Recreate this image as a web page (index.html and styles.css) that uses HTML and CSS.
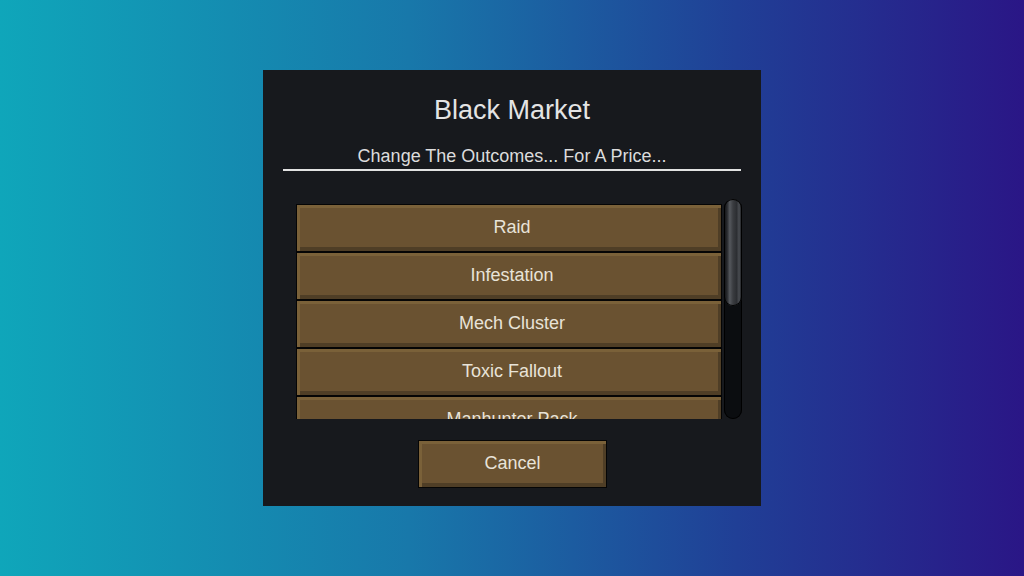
FILE: index.html
```html
<!DOCTYPE html>
<html lang="en">
<head>
    <meta charset="UTF-8">
    <meta name="viewport" content="width=device-width, initial-scale=1.0">
    <title>Black Market</title>
    <link rel="stylesheet" href="styles.css">
</head>
<body>
    <div class="market-dialog">
        <div class="dialog-title">Black Market</div>
        <div class="dialog-subtitle">Change The Outcomes... For A Price...</div>

        <!-- Scrollable list of events -->
        <div class="event-scroll">
            <div class="event-list">
                <div class="event-row">Raid</div>
                <div class="event-row">Infestation</div>
                <div class="event-row">Mech Cluster</div>
                <div class="event-row">Toxic Fallout</div>
                <div class="event-row">Manhunter Pack</div>
            </div>
            <div class="scroll-track">
                <div class="scroll-thumb"></div>
            </div>
        </div>

        <div class="dialog-footer">
            <div class="wood-button">Cancel</div>
        </div>
    </div>
</body>
</html>
```

FILE: styles.css
```css
/* Basic styling */
body {
    font-family: "Liberation Sans", Arial, sans-serif;
    margin: 0;
    padding: 0;
    width: 1024px;
    height: 576px;
    display: flex;
    align-items: center;
    justify-content: center;
    background: linear-gradient(90deg, #0fa6ba 0%, #1878aa 40%, #203f96 72%, #2a1686 100%);
}

.market-dialog {
    box-sizing: border-box;
    width: 498px;
    height: 436px;
    background-color: #17191d;
    padding: 25px 20px 19px 20px;
    display: flex;
    flex-direction: column;
}

.dialog-title {
    text-align: center;
    color: #e4e4e4;
    font-size: 27px;
    line-height: 30px;
}

.dialog-subtitle {
    text-align: center;
    color: #dcdcdc;
    font-size: 18px;
    line-height: 20px;
    margin-top: 21px;
    padding-bottom: 3px;
    border-bottom: 2px solid #e2e2e2;
}

.event-scroll {
    display: flex;
    gap: 2px;
    height: 220px;
    margin: 28px -1px 0 13px;
}

.event-list {
    width: 426px;
    padding-top: 5px;
    overflow: hidden;
}

/* Wooden plank rows */
.event-row,
.wood-button {
    box-sizing: border-box;
    height: 48px;
    display: flex;
    align-items: center;
    justify-content: center;
    color: #e8e3d8;
    font-size: 18px;
    padding-bottom: 2px;
    background-color: #6a5231;
    border: 1px solid #050505;
    box-shadow: inset 3px 3px 0 #7a6139, inset -3px -4px 0 #4f3e26;
}

.event-row {
    padding-left: 6px;
}

.scroll-track {
    width: 18px;
    height: 220px;
    background-color: #0b0d10;
    border-radius: 9px;
    box-shadow: inset 0 0 0 1px #000;
}

.scroll-thumb {
    height: 107px;
    border-radius: 9px;
    background: linear-gradient(90deg, #0d0e10 0%, #2a2c30 18%, #55585d 32%, #3a3c40 50%, #2c2e32 70%, #4a4d52 84%, #111214 100%);
    box-shadow: inset 0 0 0 1px #000;
}

.dialog-footer {
    display: flex;
    justify-content: center;
    margin-top: 21px;
}

.wood-button {
    width: 189px;
    margin-left: 1px;
}
```
